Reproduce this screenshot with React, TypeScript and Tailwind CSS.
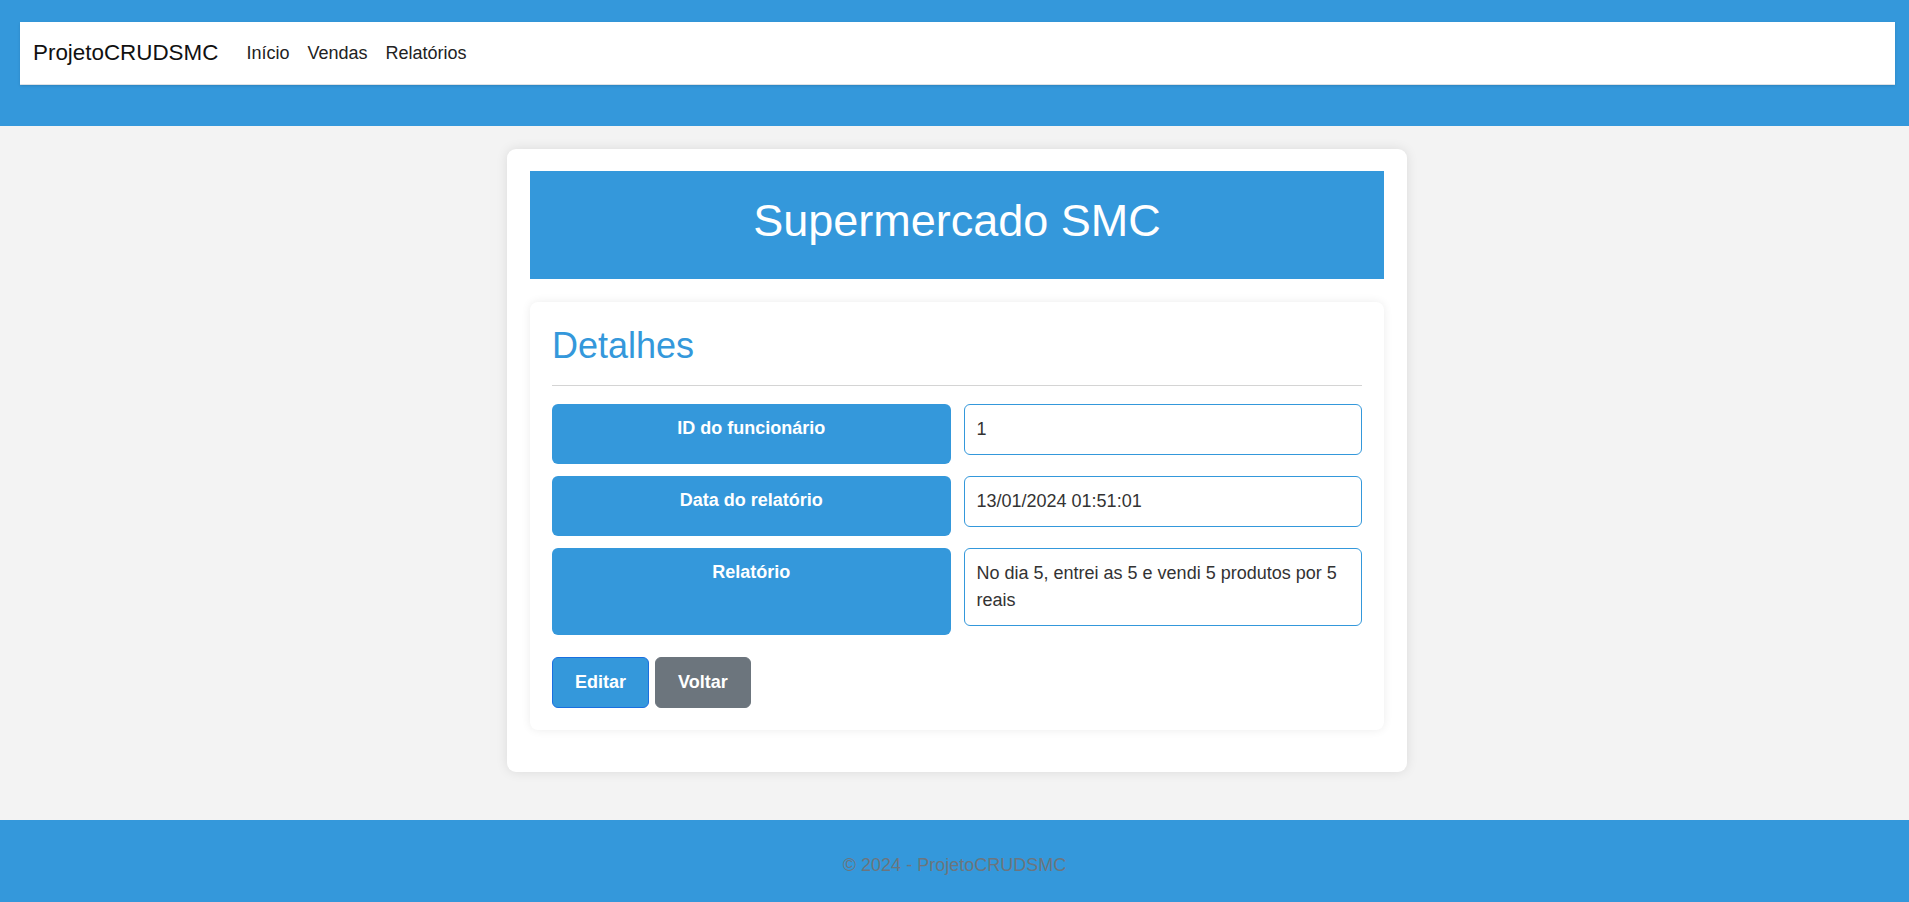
// Detalhes do relatório - Supermercado SMC

const rows = [
  { label: 'ID do funcionário', value: '1' },
  { label: 'Data do relatório', value: '13/01/2024 01:51:01' },
  { label: 'Relatório', value: 'No dia 5, entrei as 5 e vendi 5 produtos por 5 reais' },
];

export default function App() {
  return (
    <div className="min-h-screen flex flex-col bg-[#f3f3f3] font-['Liberation_Sans',Arial,sans-serif] text-[18px] leading-[1.5] text-[#212529]">
      {/* HEADER */}
      <header className="bg-[#3498db] pt-[22px] pb-[41px]">
        <nav className="ml-[20px] mr-[14px] h-[63px] bg-white border-b border-[#dee2e6] shadow-sm flex items-center px-[13px]">
          <a href="#" className="text-[22.4px] text-[#111] mr-[19px] leading-[1.5]">ProjetoCRUDSMC</a>
          <ul className="flex items-center">
            <li><a href="#" className="px-[9px] text-[#222]">Início</a></li>
            <li><a href="#" className="px-[9px] text-[#222]">Vendas</a></li>
            <li><a href="#" className="px-[9px] text-[#222]">Relatórios</a></li>
          </ul>
        </nav>
      </header>

      {/* CONTEUDO */}
      <main className="flex-1 flex justify-center pl-[5px] pt-[23px] pb-[48px]">
        <div className="w-[900px] bg-white rounded-[9px] shadow-[0_0_12px_rgba(0,0,0,0.1)] px-[23px] pt-[22px] pb-[40px]">
          <div className="bg-[#3498db] text-white text-center pt-[23px] pb-[31px]">
            <h1 className="text-[45px] leading-[1.2]">Supermercado SMC</h1>
          </div>

          <div className="mt-[23px] bg-white rounded-[8px] shadow-[0_0_10px_rgba(0,0,0,0.08)] p-[22px]">
            <h2 className="text-[36px] leading-[1.2] text-[#3498db]">Detalhes</h2>
            <hr className="mt-[18px] mb-[18px] border-t border-[#d4d4d4]" />

            <div className="flex flex-col gap-[12px]">
              {rows.map((r) => (
                <div key={r.label} className="grid grid-cols-2 gap-[13px]">
                  <div className="bg-[#3498db] text-white font-bold text-center rounded-[6px] pt-[11px] px-[10px]">
                    {r.label}
                  </div>
                  <div className="mb-[9px] border border-[#3498db] rounded-[6px] px-[12px] py-[11px] bg-white text-[#333]">
                    {r.value}
                  </div>
                </div>
              ))}
            </div>

            <div className="flex gap-[6px] mt-[22px]">
              <button className="h-[51px] px-[22px] rounded-[6px] bg-[#3498db] border border-[#1a6fe0] text-white font-bold">
                Editar
              </button>
              <button className="h-[51px] px-[22px] rounded-[6px] bg-[#6c757d] border border-[#6c757d] text-white font-bold">
                Voltar
              </button>
            </div>
          </div>
        </div>
      </main>

      {/* RODAPE */}
      <footer className="h-[82px] bg-[#3498db] text-center pt-[32px] text-[#6c757d]">
        &copy; 2024 - ProjetoCRUDSMC
      </footer>
    </div>
  );
}
